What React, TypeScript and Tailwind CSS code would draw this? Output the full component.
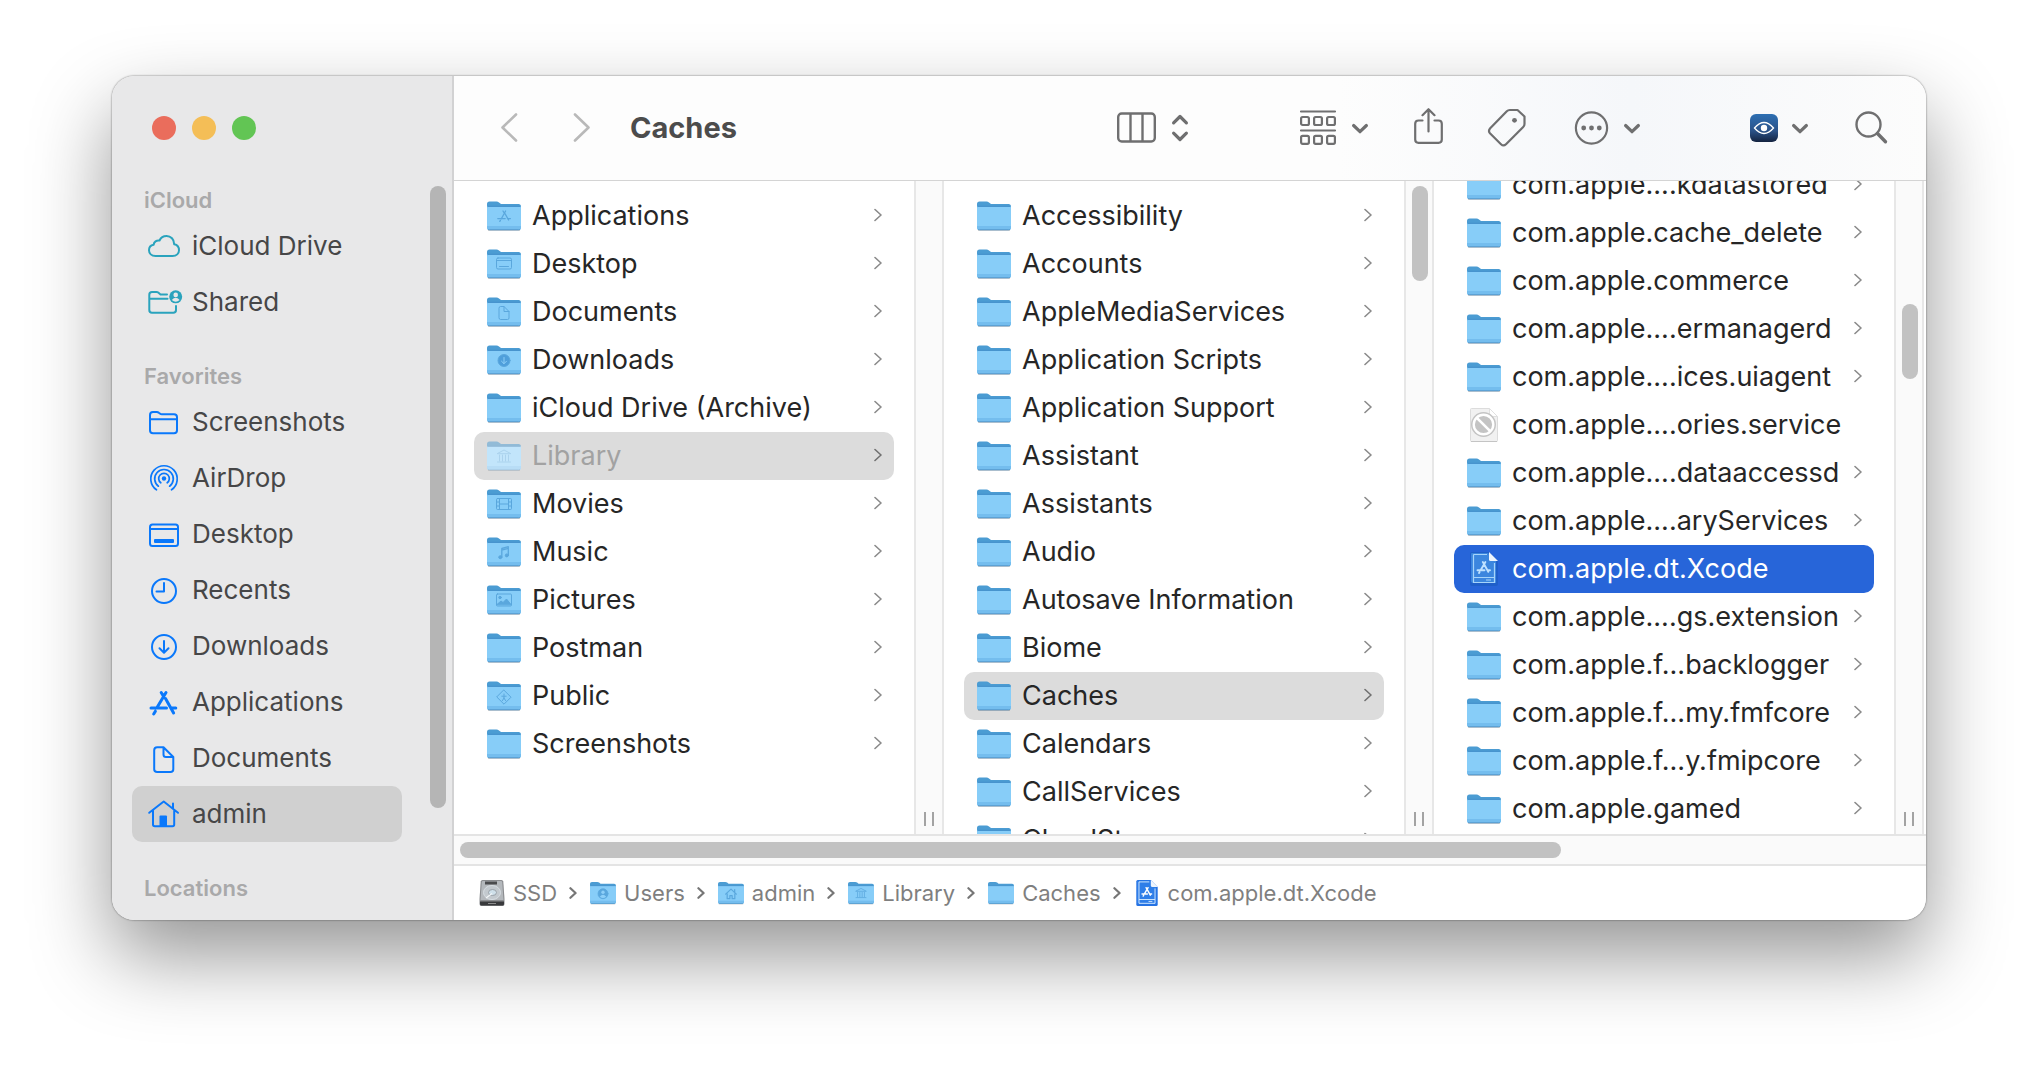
import { ReactNode, useState } from "react";
import clsx from "clsx";

type Glyph =
  | "apps"
  | "desktop"
  | "document"
  | "download"
  | "library"
  | "movie"
  | "music"
  | "picture"
  | "public"
  | "user"
  | "home";

interface Entry {
  name: string;
  kind?: "folder" | "blocked" | "xcode";
  glyph?: Glyph;
  dimmed?: boolean;
}

const homeEntries: Entry[] = [
  { name: "Applications", glyph: "apps" },
  { name: "Desktop", glyph: "desktop" },
  { name: "Documents", glyph: "document" },
  { name: "Downloads", glyph: "download" },
  { name: "iCloud Drive (Archive)" },
  { name: "Library", glyph: "library", dimmed: true },
  { name: "Movies", glyph: "movie" },
  { name: "Music", glyph: "music" },
  { name: "Pictures", glyph: "picture" },
  { name: "Postman" },
  { name: "Public", glyph: "public" },
  { name: "Screenshots" },
];

const libraryEntries: Entry[] = [
  { name: "Accessibility" },
  { name: "Accounts" },
  { name: "AppleMediaServices" },
  { name: "Application Scripts" },
  { name: "Application Support" },
  { name: "Assistant" },
  { name: "Assistants" },
  { name: "Audio" },
  { name: "Autosave Information" },
  { name: "Biome" },
  { name: "Caches" },
  { name: "Calendars" },
  { name: "CallServices" },
  { name: "CloudStorage" },
];

const cacheEntries: Entry[] = [
  { name: "com.apple....kdatastored" },
  { name: "com.apple.cache_delete" },
  { name: "com.apple.commerce" },
  { name: "com.apple....ermanagerd" },
  { name: "com.apple....ices.uiagent" },
  { name: "com.apple....ories.service", kind: "blocked" },
  { name: "com.apple....dataaccessd" },
  { name: "com.apple....aryServices" },
  { name: "com.apple.dt.Xcode", kind: "xcode" },
  { name: "com.apple....gs.extension" },
  { name: "com.apple.f...backlogger" },
  { name: "com.apple.f...my.fmfcore" },
  { name: "com.apple.f...y.fmipcore" },
  { name: "com.apple.gamed" },
];

/* ---------- file icons ---------- */

const glyphs: Record<Glyph, ReactNode> = {
  apps: <path d="M16 10l1.200 2M18.600 10l-4.400 8M18 12.600l3.600 6.400M13.400 19.400l-.6 1M10.800 17.600h7.400M20.400 17.600h3" strokeWidth="1.300" />,
  desktop: (
    <>
      <rect x="9.500" y="9" width="15" height="11" rx="1.500" />
      <path d="M9.500 11.500h15M12.500 17.500h9" />
    </>
  ),
  document: <path d="M12 11q0-1.500 1.500-1.500H17l5 5V21q0 1.500-1.500 1.500h-7Q12 22.500 12 21zM17 9.500V14.500H22" />,
  download: (
    <>
      <circle cx="17" cy="15.500" r="6" fill="#4f9fdb" />
      <path d="M17 12.500v6M14.500 16.200l2.500 2.500 2.500-2.500" stroke="#8dcff8" />
    </>
  ),
  library: <path d="M10.500 12.500L17 9 23.500 12.500zM12.500 14v6M15.500 14v6M18.500 14v6M21.500 14v6M10.500 21h13" />,
  movie: (
    <>
      <rect x="9.500" y="9.500" width="15" height="11" rx="1" />
      <path d="M12.500 9.500v11M21.500 9.500v11M12.500 15h9M9.500 13h3M9.500 17h3M21.500 13h3M21.500 17h3" />
    </>
  ),
  music: (
    <>
      <path d="M14.800 20v-8.500l6.500-1.800v8.500M14.800 13.200l6.500-1.800" strokeWidth="1.300" />
      <circle cx="13.300" cy="20.200" r="1.500" fill="#5aa7dd" />
      <circle cx="19.800" cy="18.400" r="1.500" fill="#5aa7dd" />
    </>
  ),
  picture: (
    <>
      <rect x="9.500" y="9" width="15" height="12" rx="1" />
      <circle cx="13" cy="12.500" r="1.200" fill="#5aa7dd" />
      <path d="M10 19.500l4-3.500 2 1.500 3.500-3.500 4.500 5.500z" fill="#5aa7dd" />
    </>
  ),
  public: (
    <>
      <path d="M17 9.200l7 7-7 7-7-7z" />
      <path d="M17 13v1M14.800 15.200h4.400M17 14.800v2.200l-1.600 2.600M17 17l1.600 2.600" />
    </>
  ),
  user: (
    <>
      <circle cx="17" cy="16" r="6.500" fill="#5aa7dd" />
      <circle cx="17" cy="14" r="2.200" fill="#8dcff8" stroke="none" />
      <path d="M12.800 19.800q4.200-5 8.400 0q-4.200 3.500-8.400 0z" fill="#8dcff8" stroke="none" />
    </>
  ),
  home: <path d="M10 16.500l7-6.500 7 6.500M12 16v6.500h3.500v-4h3v4H22V16M21.800 10.500v3.500" strokeWidth="1.600" />,
};

function FolderIcon({ glyph, pale, className }: { glyph?: Glyph; pale?: boolean; className?: string }) {
  return (
    <svg className={className} viewBox="0 0 34 30" fill="none">
      {/* white base keeps a faded folder brighter than the row under it */}
      {pale && <path d="M0 5.500H34V26.500Q34 29 31.500 29H2.500Q0 29 0 26.500z" fill="#fff" />}
      <g opacity={pale ? 0.5 : 1}>
        <path d="M1 29h32" stroke="#000" strokeOpacity=".25" strokeWidth="1.500" />
        <path d="M0 3Q0 .5 2.500 .5H9.500Q11 .5 12 1.400L13.300 2.500Q14 3 15 3H31.500Q34 3 34 5.500V12H0z" fill="#4b9cd3" />
        <path d="M0 6.500Q0 5.500 1 5.500H33Q34 5.500 34 6.500V26.500Q34 29 31.500 29H2.500Q0 29 0 26.500z" fill="#87cdf8" />
        <path d="M0 25H34V26.500Q34 29 31.500 29H2.500Q0 29 0 26.500z" fill="#74bdee" />
        <path d="M1 28.200q.6 .6 1.500 .6H31.500q.9 0 1.500-.6" stroke="#5498cb" />
        <path d="M1 5.400H33" stroke="#3a86c4" strokeWidth=".8" />
        {glyph && (
          <g stroke="#5aa7dd" strokeLinecap="round" strokeLinejoin="round">
            {glyphs[glyph]}
          </g>
        )}
      </g>
    </svg>
  );
}

function BlockedIcon() {
  return (
    <svg className="h-[34px] w-[34px]" viewBox="0 0 34 34" fill="none">
      <path d="M3.500 1.500q0-1 1-1H22.500L30.500 8.500V32.500q0 1-1 1H4.500q-1 0-1-1z" fill="#f1f1f1" stroke="#dcdcdc" />
      <path d="M4 33.500H30" stroke="#c4c4c4" />
      <path d="M22.500 .5V7q0 1.500 1.500 1.500H30.500z" fill="#fff" stroke="#e0e0e0" />
      <circle cx="16.500" cy="16.500" r="12.500" fill="#c4c4c4" />
      <circle cx="16.500" cy="16.500" r="9.800" fill="#c4c4c4" stroke="#fff" strokeWidth="2.400" />
      <path d="M9.800 9.800L23.200 23.200" stroke="#fff" strokeWidth="2.600" />
    </svg>
  );
}

function XcodeIcon({ className, light }: { className?: string; light?: boolean }) {
  return (
    <svg className={className} viewBox="0 0 28 34" fill="none">
      <path d="M0 2Q0 0 2 0H19L28 9V32Q28 34 26 34H2Q0 34 0 32z" fill={light ? "#1f5fc9" : "#2572e3"} />
      <path d="M1 2Q1 1 2 1H18L26 9V31H3Q1 31 1 29z" fill={light ? "#3b86de" : "#2f7ee8"} />
      <path
        d="M3.500 2.500H17M24.500 11V30.500H3.500V2.500M3.500 25.500H24.500M16 28H21"
        stroke={light ? "#a5d4fa" : "#d9ecff"}
        strokeWidth="1.200"
      />
      <path d="M19 0L28 9H20.500Q19 9 19 7.500z" fill="#eef5fd" />
      <path
        d="M12.800 10l.8 1.400M15.400 10L10.600 18.200M14.500 13L18.300 19.800M9.600 20L9 21M7.500 18.200H14.500M17.500 18.200H20"
        stroke={light ? "#bfe2ff" : "#fff"}
        strokeWidth="1.900"
        strokeLinecap="round"
      />
    </svg>
  );
}

function DiskIcon() {
  return (
    <svg className="h-[26px] w-[26px]" viewBox="0 0 26 26" fill="none">
      <path d="M3.500 0H22.500Q24 0 24.300 1.500L25.500 19V24Q25.500 26 23.500 26H2.500Q.5 26 .5 24V19L1.700 1.500Q2 0 3.500 0z" fill="#8a8c8f" />
      <path d="M4 1H22Q23 1 23.200 2L24.500 20H1.500L2.800 2Q3 1 4 1z" fill="#b4b8bc" />
      <ellipse cx="13" cy="12.500" rx="8.500" ry="7" fill="#c3c9ce" stroke="#d8dee3" />
      <rect x="6" y="1.500" width="12" height="3" fill="#4a4b4d" />
      <ellipse cx="13.500" cy="12.500" rx="4" ry="3" fill="#cfe0ea" stroke="#9aa1a8" />
      <path d="M7 18l6-4.500" stroke="#f4f6f8" strokeWidth="1.200" />
      <path d="M1 21.500H25V24Q25 25.500 23.500 25.500H2.500Q1 25.500 1 24z" fill="#38393b" />
      <path d="M9 23.500h8" stroke="#8d8d8d" />
    </svg>
  );
}

function Chevron({ className }: { className?: string }) {
  return (
    <svg className={className} viewBox="0 0 8 14" fill="none" stroke="currentColor" strokeLinecap="round" strokeLinejoin="round">
      <path d="M1 1.500L7 7 1 12.500" />
    </svg>
  );
}

/* ---------- sidebar ---------- */

const sideIcons: Record<string, ReactNode> = {
  cloud: (
    <path d="M7.500 26H24.500C28.500 26 31 23.500 31 20.200C31 17 28.800 14.700 26.200 14.200C26.200 9.300 22.800 6 18.600 6C15.300 6 12.700 7.800 11.500 10.500C8.500 9.900 5.900 11.900 5.600 14.800C3 15.300 1 17.500 1 20.200C1 23.500 3.500 26 7.500 26z" />
  ),
  shared: (
    <>
      <path d="M19 8.500H12.500L10.200 6.600Q9.500 6 8.500 6H4Q1.300 6 1.300 8.700V24Q1.300 26.800 4 26.800H25.300Q28 26.800 28 24V20M1.300 12.800H19.500" />
      <circle cx="27.700" cy="10.800" r="6.500" fill="currentColor" stroke="none" />
      <circle cx="27.700" cy="8.900" r="2.300" fill="#e8e8e9" stroke="none" />
      <path d="M23.800 14q3.900-4.400 7.800 0q-3.900 3.600-7.800 0z" fill="#e8e8e9" stroke="none" />
    </>
  ),
  folder: (
    <path d="M2 9Q2 6 5 6H8.800Q10 6 10.800 6.700L12.200 7.800Q12.800 8.300 13.800 8.300H26Q29 8.300 29 11.300V24.300Q29 27.200 26 27.200H5Q2 27.200 2 24.300zM2 13.200H29" />
  ),
  airdrop: (
    <>
      <circle cx="16" cy="16.500" r="2.200" fill="currentColor" stroke="none" />
      <path d="M12.800 20.800a5.300 5.300 0 1 1 6.400 0M10.400 24.200a9.300 9.300 0 1 1 11.200 0M8.500 27.800a13.200 13.200 0 1 1 15 0" strokeWidth="1.700" />
    </>
  ),
  desktop: (
    <>
      <rect x="2" y="6.500" width="28" height="21.500" rx="2.500" />
      <path d="M2 11H30" />
      <rect x="6" y="21" width="20" height="4" rx="1" fill="currentColor" stroke="none" />
    </>
  ),
  clock: (
    <>
      <circle cx="16" cy="17" r="12" />
      <path d="M16 9V17.500H8.500" />
    </>
  ),
  download: (
    <>
      <circle cx="16" cy="17" r="12" />
      <path d="M16 11V22.500M11.500 18.300L16 22.700 20.500 18.300" />
    </>
  ),
  apps: (
    <path
      d="M13.200 6.500L15.300 10M18 6.500L8.900 21.700M17.500 12.500L25.600 27M7.400 25.200L5.700 28M3 22H18.500M23 22H27.800"
      strokeWidth="3"
    />
  ),
  document: (
    <path d="M6.200 8.200Q6.200 5.200 9.200 5.200H15.500L25.300 15V27.200Q25.300 30 22.500 30H9.200Q6.200 30 6.200 27.200zM15.500 5.500V12.500Q15.500 15 18 15H25" />
  ),
  house: (
    <>
      <path d="M1.200 14.800L15.700 3.500 30 14.800M5 12.500V26.500Q5 28.300 6.800 28.300H24.500Q26.200 28.300 26.200 26.500V12.500M25 5.500V10.500" />
      <path d="M11.500 18.500Q11.500 17.500 12.500 17.500H18Q19 17.500 19 18.500V28.500H11.500z" fill="currentColor" stroke="none" />
    </>
  ),
};

interface SideItem {
  label: string;
  icon: string;
}

const sideSections: { title: string; tint: string; items: SideItem[] }[] = [
  {
    title: "iCloud",
    tint: "text-[#2aa3bd]",
    items: [
      { label: "iCloud Drive", icon: "cloud" },
      { label: "Shared", icon: "shared" },
    ],
  },
  {
    title: "Favorites",
    tint: "text-[#0a78fb]",
    items: [
      { label: "Screenshots", icon: "folder" },
      { label: "AirDrop", icon: "airdrop" },
      { label: "Desktop", icon: "desktop" },
      { label: "Recents", icon: "clock" },
      { label: "Downloads", icon: "download" },
      { label: "Applications", icon: "apps" },
      { label: "Documents", icon: "document" },
      { label: "admin", icon: "house" },
    ],
  },
  { title: "Locations", tint: "text-[#0a78fb]", items: [] },
];

function Sidebar() {
  const [active, setActive] = useState("admin");

  return (
    <aside className="flex w-[342px] shrink-0 flex-col border-r-2 border-[#d2d2d3] bg-[#e8e8e9]">
      <div className="flex h-[78px] shrink-0 items-end gap-4 px-10 pb-[14px]">
        <button aria-label="Close" className="size-6 rounded-full bg-[#ea6d5c]" />
        <button aria-label="Minimize" className="size-6 rounded-full bg-[#f4be57]" />
        <button aria-label="Zoom" className="size-6 rounded-full bg-[#62c554]" />
      </div>
      <div className="flex min-h-0 flex-1 justify-between overflow-hidden">
        <nav className="flex-1 pr-7 pl-5">
          {sideSections.map((section) => (
            <section key={section.title}>
              <h2 className="flex h-16 items-end pb-1 pl-3 text-[22px] leading-7 font-semibold text-[#a9a9aa]">{section.title}</h2>
              {section.items.map((item) => (
                <a
                  key={item.label}
                  href="#"
                  onClick={() => setActive(item.label)}
                  className={clsx(
                    "flex h-14 items-center gap-3 rounded-[10px] pl-4 text-[26px] leading-8 text-[#464647]",
                    active === item.label && "bg-[#d0d0d0]"
                  )}
                >
                  <svg
                    className={clsx("size-8 shrink-0 overflow-visible", section.tint)}
                    viewBox="0 0 32 32"
                    fill="none"
                    stroke="currentColor"
                    strokeWidth="2"
                    strokeLinecap="round"
                    strokeLinejoin="round"
                  >
                    {sideIcons[item.icon]}
                  </svg>
                  {item.label}
                </a>
              ))}
            </section>
          ))}
        </nav>
        <div className="mt-8 mr-1.5 h-[622px] w-4 shrink-0 rounded-full bg-[#b5b5b5]" />
      </div>
    </aside>
  );
}

/* ---------- toolbar ---------- */

function DownChevron() {
  return (
    <svg className="h-[18px] w-[18px]" viewBox="0 0 18 18" fill="none" stroke="currentColor" strokeWidth="3.200" strokeLinecap="round" strokeLinejoin="round">
      <path d="M2.600 6.500L9 12.700 15.400 6.500" />
    </svg>
  );
}

function Toolbar() {
  return (
    <header className="flex h-[105px] shrink-0 items-center border-b border-[#d4d4d4] bg-linear-to-r from-[#fdfdfd] from-60% via-[#f5f7fa] via-80% to-[#fcfcfc] pr-[38px] pl-[46px] text-[#6f6f70]">
      <button aria-label="Back" className="text-[#b9b9b9]">
        <svg className="h-[30px] w-[18px]" viewBox="0 0 18 30" fill="none" stroke="currentColor" strokeWidth="2.600" strokeLinecap="round" strokeLinejoin="round">
          <path d="M16 1.500L2.500 14.500 16 27.500" />
        </svg>
      </button>
      <button aria-label="Forward" className="ml-[55px] text-[#b9b9b9]">
        <svg className="h-[30px] w-[18px]" viewBox="0 0 18 30" fill="none" stroke="currentColor" strokeWidth="2.600" strokeLinecap="round" strokeLinejoin="round">
          <path d="M2 1.500L15.500 14.500 2 27.500" />
        </svg>
      </button>
      <h1 className="ml-[39px] flex-1 text-[29px] font-bold text-[#4c4c4c]">Caches</h1>

      <button aria-label="View as columns" className="flex items-center gap-[14px]">
        <svg className="h-8 w-[41px]" viewBox="0 0 41 32" fill="none" stroke="currentColor" strokeWidth="2.400">
          <rect x="2.200" y="1.500" width="36.600" height="28" rx="3.500" />
          <path d="M14.500 1.500V29.500M26.500 1.500V29.500" />
        </svg>
        <svg className="h-[30px] w-[18px]" viewBox="0 0 18 30" fill="none" stroke="currentColor" strokeWidth="3.200" strokeLinecap="round" strokeLinejoin="round">
          <path d="M2.600 9.800L9 3.500 15.400 9.800M2.600 20.200L9 26.500 15.400 20.200" />
        </svg>
      </button>

      <button aria-label="Group items" className="ml-[110px] flex items-center gap-[14px]">
        <svg className="h-9 w-[38px]" viewBox="0 0 38 36" fill="none" stroke="currentColor" strokeWidth="2.200" strokeLinecap="round">
          <path d="M2 1.500H36M2 20.500H36" />
          <rect x="2.100" y="7" width="7.800" height="8" rx="1.500" />
          <rect x="15.100" y="7" width="7.800" height="8" rx="1.500" />
          <rect x="28.100" y="7" width="7.800" height="8" rx="1.500" />
          <rect x="2.100" y="25.800" width="7.800" height="8" rx="1.500" />
          <rect x="15.100" y="25.800" width="7.800" height="8" rx="1.500" />
          <rect x="28.100" y="25.800" width="7.800" height="8" rx="1.500" />
        </svg>
        <DownChevron />
      </button>

      <button aria-label="Share" className="ml-11">
        <svg className="h-10 w-[31px]" viewBox="0 0 31 40" fill="none" stroke="currentColor" strokeWidth="2.200" strokeLinecap="round" strokeLinejoin="round">
          <path d="M9.500 12.500H5.500Q2.200 12.500 2.200 15.800V31.500Q2.200 34.800 5.500 34.800H25.500Q28.800 34.800 28.800 31.500V15.800Q28.800 12.500 25.500 12.500H21.500" />
          <path d="M15.500 23.500V1.500M9.500 7.200L15.500 1.200 21.500 7.200" />
        </svg>
      </button>

      <button aria-label="Edit tags" className="ml-[43px]">
        <svg className="size-10" viewBox="0 0 40 40" fill="none" stroke="currentColor" strokeWidth="2.200" strokeLinejoin="round">
          <path d="M19.800 3.200Q21 2 22.800 2H30.500L37.500 8.500V16Q37.500 17.800 36.200 19L19 36.200Q16.500 38.600 14 36.200L3.200 25.500Q.8 23 3.200 20.300z" />
          <circle cx="27.500" cy="12.300" r="2.400" fill="currentColor" stroke="none" />
        </svg>
      </button>

      <button aria-label="More actions" className="ml-[47px] flex items-center gap-[14px]">
        <svg className="size-[35px]" viewBox="0 0 35 35" fill="none" stroke="currentColor" strokeWidth="2.200">
          <circle cx="17.500" cy="17" r="15.600" />
          <g fill="currentColor" stroke="none">
            <circle cx="9.700" cy="17" r="2.400" />
            <circle cx="17.500" cy="17" r="2.400" />
            <circle cx="25.300" cy="17" r="2.400" />
          </g>
        </svg>
        <DownChevron />
      </button>

      <button aria-label="Preview extension" className="ml-[109px] flex items-center gap-[13px]">
        <svg className="size-7" viewBox="0 0 28 28" fill="none">
          <defs>
            <linearGradient id="eye-bg" x1="0" y1="0" x2="0" y2="1">
              <stop offset="0" stopColor="#2d6fb3" />
              <stop offset=".6" stopColor="#2b5288" />
              <stop offset="1" stopColor="#142340" />
            </linearGradient>
          </defs>
          <rect width="28" height="28" rx="6" fill="url(#eye-bg)" />
          <path d="M4.500 14Q14 3 23.500 14Q14 25 4.500 14z" stroke="#fff" strokeWidth="1.300" />
          <circle cx="14" cy="14" r="3.200" fill="#fff" />
        </svg>
        <DownChevron />
      </button>

      <button aria-label="Search" className="ml-[45px]">
        <svg className="size-[34px]" viewBox="0 0 34 34" fill="none" stroke="currentColor" strokeWidth="2.400" strokeLinecap="round">
          <circle cx="14.500" cy="13.500" r="12" />
          <path d="M23.500 22.500L31.500 30.700" strokeWidth="3.400" />
        </svg>
      </button>
    </header>
  );
}

/* ---------- column browser ---------- */

interface ColumnProps {
  entries: Entry[];
  initial: string;
  scrolled?: boolean;
  focused?: boolean;
  thumb?: string;
}

function Column({ entries, initial, scrolled, focused, thumb }: ColumnProps) {
  const [selected, setSelected] = useState(initial);

  return (
    <div className="flex h-full w-[490px] shrink-0">
      <ul className={clsx("min-w-0 flex-1 px-5", scrolled ? "-mt-5" : "pt-[11px]")}>
        {entries.map((entry) => {
          const isSelected = entry.name === selected;
          const highlighted = isSelected && focused;
          return (
            <li key={entry.name}>
              <button
                onClick={() => setSelected(entry.name)}
                className={clsx(
                  "flex h-12 w-full items-center rounded-[10px] pr-3 pl-[13px] text-left text-[27px] leading-8 whitespace-nowrap",
                  highlighted ? "bg-[#2765d9] text-white" : entry.dimmed ? "text-[#a2a2a2]" : "text-[#262626]",
                  isSelected && !highlighted && "bg-[#dcdcdc]"
                )}
              >
                <span className="flex w-[34px] shrink-0 justify-center">
                  {entry.kind === "blocked" ? (
                    <BlockedIcon />
                  ) : entry.kind === "xcode" ? (
                    <XcodeIcon light className="h-[34px] w-7" />
                  ) : (
                    <FolderIcon glyph={entry.glyph} pale={entry.dimmed} className="h-[30px] w-[34px]" />
                  )}
                </span>
                <span className="ml-[11px] min-w-0 flex-1">{entry.name}</span>
                {(!entry.kind || entry.kind === "folder") && (
                  <Chevron className={clsx("mb-0.5 h-[14px] w-2 shrink-0 stroke-[1.6]", isSelected ? "text-[#707070]" : "text-[#8a8a8a]")} />
                )}
              </button>
            </li>
          );
        })}
      </ul>
      <div className="flex w-[30px] flex-col border-x-2 border-[#e7e7e7] bg-[#fafafa]">
        <div className="min-h-0 flex-1 pl-1.5">{thumb && <div className={clsx("w-4 rounded-full bg-[#c2c2c2]", thumb)} />}</div>
        <div className="flex justify-center gap-1.5 pb-2">
          <span className="h-[14px] w-0.5 bg-[#a3a3a3]" />
          <span className="h-[14px] w-0.5 bg-[#a3a3a3]" />
        </div>
      </div>
    </div>
  );
}

/* ---------- path bar ---------- */

const crumbs: { name: string; icon: ReactNode }[] = [
  { name: "SSD", icon: <DiskIcon /> },
  { name: "Users", icon: <FolderIcon glyph="user" className="h-6 w-[26px]" /> },
  { name: "admin", icon: <FolderIcon glyph="home" className="h-6 w-[26px]" /> },
  { name: "Library", icon: <FolderIcon glyph="library" className="h-6 w-[26px]" /> },
  { name: "Caches", icon: <FolderIcon className="h-6 w-[26px]" /> },
  { name: "com.apple.dt.Xcode", icon: <XcodeIcon className="h-[26px] w-[22px]" /> },
];

function PathBar() {
  return (
    <nav aria-label="Path" className="h-[54px] shrink-0 bg-white pl-[25px]">
      <ol className="flex h-full items-center text-[22px] leading-7 text-[#7f7f7f]">
        {crumbs.map((crumb, i) => (
          <li key={crumb.name} className="flex items-center">
            {i > 0 && <Chevron className="mr-[13px] ml-3 h-3 w-2 stroke-[2.6] text-[#767676]" />}
            <a href="#" className="flex items-center gap-2">
              <span className="flex w-[26px] justify-center">{crumb.icon}</span>
              {crumb.name}
            </a>
          </li>
        ))}
      </ol>
    </nav>
  );
}

export default function App() {
  return (
    <div className="h-screen bg-white px-28 pt-19 pb-37 font-['Inter',sans-serif]">
      <div className="flex h-full overflow-hidden rounded-[22px] bg-white shadow-[0_0_2px_rgba(0,0,0,0.6),0_36px_80px_rgba(0,0,0,0.42)]">
        <Sidebar />
        <main className="flex min-w-0 flex-1 flex-col">
          <Toolbar />
          <div className="flex min-h-0 flex-1 overflow-hidden">
            <Column entries={homeEntries} initial="Library" />
            <Column entries={libraryEntries} initial="Caches" thumb="mt-[5px] h-[95px]" />
            <Column entries={cacheEntries} initial="com.apple.dt.Xcode" scrolled focused thumb="mt-[123px] h-[75px]" />
          </div>
          <div className="flex h-8 shrink-0 items-center border-y-2 border-[#e4e4e4] bg-[#fafafa] px-1.5">
            <div className="h-4 w-[75.4%] rounded-full bg-[#c2c2c2]" />
          </div>
          <PathBar />
        </main>
      </div>
    </div>
  );
}
